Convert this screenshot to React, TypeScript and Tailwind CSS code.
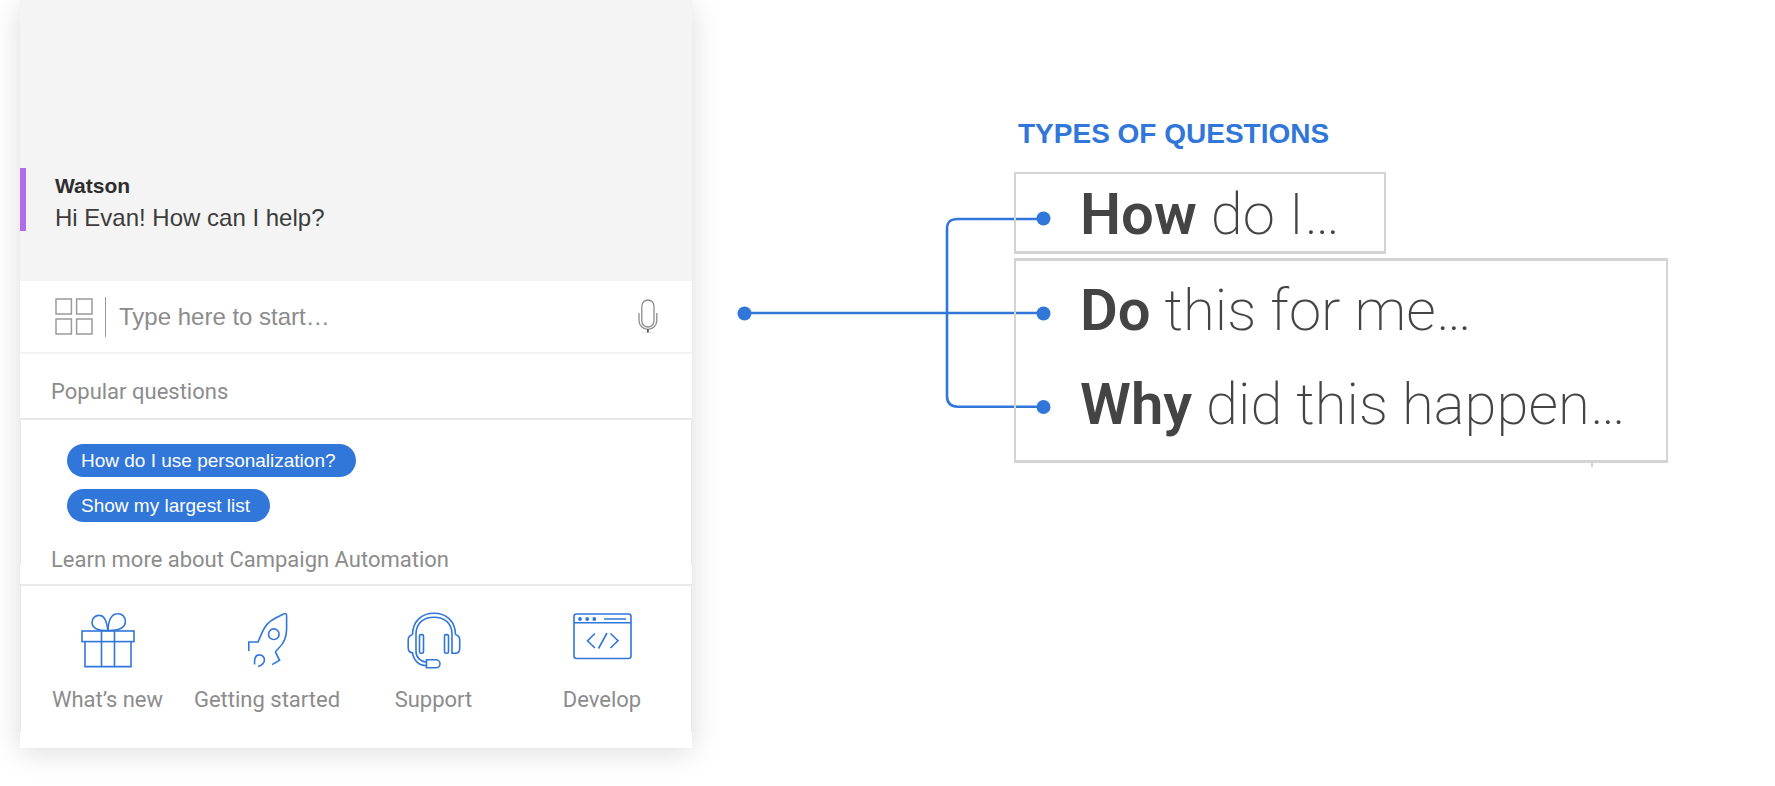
import type { ReactNode } from "react";

const suggestions = ["How do I use personalization?", "Show my largest list"];

const GridIcon = () => (
  <svg width="38" height="37" viewBox="0 0 38 37" fill="none" stroke="#9a9a9a" strokeWidth="1.5">
    <rect x="1" y="1" width="15.4" height="15" />
    <rect x="21.6" y="1" width="15.4" height="15" />
    <rect x="1" y="21" width="15.4" height="15" />
    <rect x="21.6" y="21" width="15.4" height="15" />
  </svg>
);

const MicIcon = () => (
  <svg width="20" height="35" viewBox="0 0 20 35" fill="none" stroke="#8c8c8c" strokeWidth="1.3">
    <rect x="3.8" y="1" width="12.2" height="27" rx="6.1" />
    <path d="M1 14v7.5a8.9 8.9 0 0 0 17.8 0V14" />
    <path d="M9.9 30.5v3.5" stroke="#222" strokeWidth="1.4" />
    <path d="M3.5 33.7h13" stroke="#ddd" strokeWidth="0.8" />
  </svg>
);

const GiftIcon = () => (
  <svg width="54" height="58" viewBox="0 0 54 58" fill="none" stroke="#3176d9" strokeWidth="1.6">
    <rect x="1" y="19" width="52" height="10.6" />
    <path d="M4 29.6v25h46v-25M20.5 19v35.6M33.5 19v35.6" />
    <path d="M27 18.5C20 18.8 11 17.5 11 10.2a6.8 6.8 0 0 1 7-6.8c6.5 0 7.8 8 9 15.1" />
    <path d="M27 18.5c.3-9 2.5-16.8 9.8-16.8a7.4 7.4 0 0 1 7.6 7.6c0 7.6-8 9.4-17.4 9.2" />
  </svg>
);

const RocketIcon = () => (
  <svg width="42" height="58" viewBox="0 0 42 58" fill="none" stroke="#3176d9" strokeWidth="1.6">
    <path d="M2.8 39v-9H12.1C15.6 22 17.6 14 24.6 9.2 29.1 6 33.6 4 37.6 2c1.9-.9 3-.4 3 1.5V17c0 9-3 14.5-7.7 19-3 3-3.5 3.700-3.400 4.200L33.600 48.300 26.100 52.600" />
    <circle cx="27.8" cy="22.2" r="5.3" />
    <path d="M8.600 52.500C8.300 47 9.100 42.900 13.300 42.900a4.900 4.900 0 0 1 5.100 5.200c0 3.500-3 5.400-6.300 6.500" />
  </svg>
);

const HeadsetIcon = () => (
  <svg width="54" height="58" viewBox="0 0 54 58" fill="none" stroke="#3176d9" strokeWidth="1.6">
    <path d="M5.5 22.8C5.5 9 15 1.2 27 1.2S48.5 9 48.5 22.8" />
    <path d="M5.5 22.8C2.5 23.4 1.2 25 1.2 28v7.5c0 3 1.3 5.2 4.3 5.2C6.5 48.5 12 53.6 19.5 53.6" />
    <path d="M19.5 50.2C13.5 49.6 9 45.5 9 39.5V22C9 11 17 5.2 27 5.2S45 11 45 22v19.2h3c3 0 4.7-1.7 4.7-4.7V28c0-3-1.2-4.6-4.2-5.2" />
    <path d="M19.5 47.8H29a4 4 0 0 1 4 4 4 4 0 0 1-4 4H19.5z" />
    <rect x="12.5" y="22.6" width="4" height="18.6" rx="1.5" />
    <rect x="37.5" y="22.6" width="4" height="18.6" rx="1.5" />
  </svg>
);

const DevelopIcon = () => (
  <svg width="60" height="58" viewBox="0 0 60 58" fill="none" stroke="#3176d9" strokeWidth="1.6">
    <rect x="2" y="2" width="57" height="44.5" rx="2.5" />
    <path d="M2 10.8h57M32 7h22" />
    <g fill="#3176d9" stroke="none">
      <circle cx="8" cy="7" r="1.9" />
      <circle cx="15.2" cy="7" r="1.9" />
      <circle cx="22.3" cy="7" r="1.9" />
    </g>
    <path d="M23 21.5 15.5 28.7l7.5 7.3M38.5 21.5l7.5 7.2L38.5 36M35 21 26.5 36.5" />
  </svg>
);

const Connector = () => (
  <svg
    className="mt-[172px] ml-11 -mr-[42px] shrink-0"
    width="320"
    height="292"
    viewBox="736 172 320 292"
    fill="none"
    stroke="#3176d9"
    strokeWidth="2.6"
  >
    <path d="M744 313h300" />
    <path d="M1044 219h-86c-8 0-11 3-11 10v167c0 7 3 10.7 11 10.7h86" />
    <g fill="#3176d9" stroke="none">
      <circle cx="744.5" cy="313.5" r="7" />
      <circle cx="1043.5" cy="218.5" r="7" />
      <circle cx="1043.5" cy="313.5" r="7" />
      <circle cx="1043.5" cy="407" r="7" />
    </g>
  </svg>
);

const links = [
  { label: "What’s new", icon: <GiftIcon /> },
  { label: "Getting started", icon: <RocketIcon /> },
  { label: "Support", icon: <HeadsetIcon /> },
  { label: "Develop", icon: <DevelopIcon /> },
];

const Question = ({ lead, children }: { lead: string; children: ReactNode }) => (
  <li className="font-['Roboto',sans-serif] text-[58px] font-extralight whitespace-nowrap text-[#444]">
    <strong className="font-semibold">{lead}</strong> {children}
  </li>
);

const ChatPanel = () => (
  <section className="self-start bg-white pb-4 shadow-[0_4px_28px_rgba(0,0,0,0.14)]">
    {/* Conversation */}
    <div className="bg-[#f4f4f4] pt-[168px] pb-[50px]">
      <div className="border-l-[6px] border-[#af6ee8] pt-[3px] pl-[29px] text-[#3c3c3c]">
        <h1 className="mb-1 text-[21px] leading-[30px] font-bold text-[#2e2e2e]">Watson</h1>
        <p className="text-2xl leading-[26px]">Hi Evan! How can I help?</p>
      </div>
    </div>

    {/* Message box */}
    <div className="flex h-[73px] items-center border-b-2 border-[#f2f2f2] pr-[34px] pl-[35px]">
      <button type="button" aria-label="Menu">
        <GridIcon />
      </button>
      <input
        type="text"
        aria-label="Message"
        placeholder="Type here to start…"
        className="ml-3 h-10 min-w-0 flex-1 border-l border-[#999] pl-[13px] text-2xl outline-none placeholder:text-[#8c8c8c]"
      />
      <button type="button" aria-label="Speak">
        <MicIcon />
      </button>
    </div>

    {/* Popular questions */}
    <h2 className="pt-6 pb-3 pl-[31px] font-['Roboto',sans-serif] text-[22px] leading-7 text-[#8c8c8c]">
      Popular questions
    </h2>
    <ul className="flex h-[148px] flex-col items-start gap-3 border-x border-t-2 border-[#e8e8e8] pt-6 pl-[46px]">
      {suggestions.map((text) => (
        <li key={text} className="flex">
          <button type="button" className="h-[33px] rounded-full bg-[#3176d9] pr-5 pl-[14px] text-[19px] leading-[33px] text-white">
            {text}
          </button>
        </li>
      ))}
    </ul>

    {/* Learn more */}
    <h2 className="-mt-5 pb-[10px] pl-[31px] font-['Roboto',sans-serif] text-[22px] leading-7 text-[#8c8c8c]">
      Learn more about Campaign Automation
    </h2>
    <nav className="grid grid-cols-[155fr_164fr_169fr_168fr] border-x border-t-2 border-[#e8e8e8] pt-[26px] pr-[5px] pb-[18px] pl-[9px]">
      {links.map(({ label, icon }) => (
        <a
          key={label}
          href="#"
          className="flex flex-col items-center gap-4 font-['Roboto',sans-serif] text-[22px] leading-7 whitespace-nowrap text-[#8c8c8c]"
        >
          {icon}
          {label}
        </a>
      ))}
    </nav>
  </section>
);

const QuestionTypes = () => (
  <section className="flex items-start">
    <Connector />
    <div className="pt-[114px]">
      <h2 className="mb-[18px] pl-1 text-[28px] leading-10 font-bold text-[#3176d9]">TYPES OF QUESTIONS</h2>
      <ul className="w-fit border-2 border-b-[3px] border-[#d4d4d4] pt-1 pr-11 pl-16 leading-[73px]">
        <Question lead="How">do I…</Question>
      </ul>
      <ul className="relative mt-1 w-fit border-2 border-y-[3px] border-[#d4d4d4] pt-[2px] pr-10 pb-[9px] pl-16 leading-[94px]">
        <Question lead="Do">this for me…</Question>
        <Question lead="Why">did this happen…</Question>
        <li aria-hidden="true" className="absolute top-full right-[73px] mt-[3px] h-1 w-[2px] bg-[#d4d4d4]" />
      </ul>
    </div>
  </section>
);

export default function App() {
  return (
    <main className="grid min-h-screen grid-cols-[672fr_1083fr] overflow-hidden bg-white pl-5 font-['Liberation_Sans',Arial,sans-serif]">
      <ChatPanel />
      <QuestionTypes />
    </main>
  );
}
